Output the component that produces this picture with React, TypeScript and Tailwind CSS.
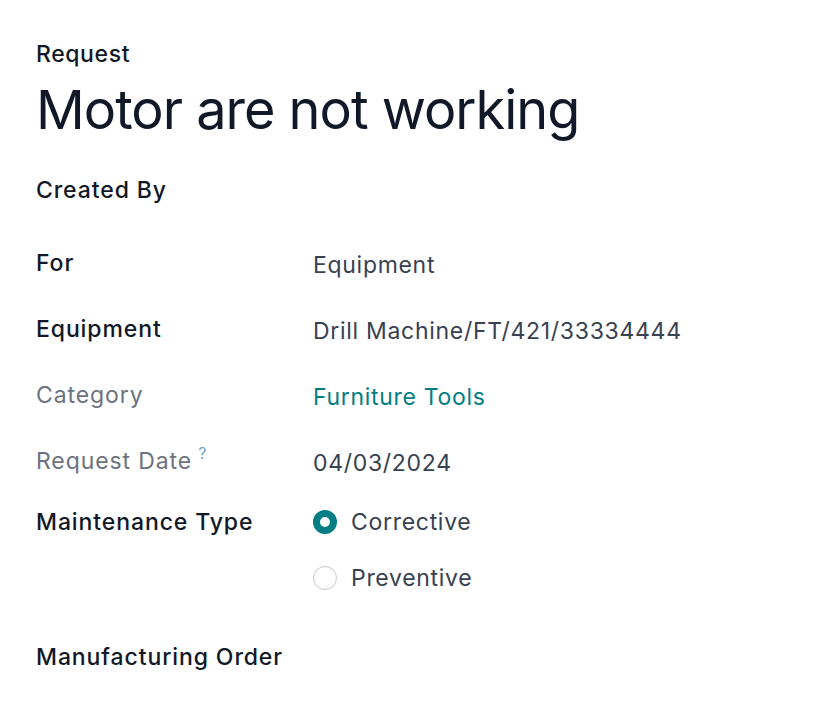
import React from "react";

const Row = ({
  label,
  muted,
  help,
  children,
}: {
  label: string;
  muted?: boolean;
  help?: boolean;
  children?: React.ReactNode;
}) => (
  <div className="grid grid-cols-[277px_1fr] items-start min-h-[66px]">
    <div
      className={`text-[23px] leading-[32px] tracking-[0.9px] ${
        muted ? "text-[#6b7280] font-normal" : "text-[#111827] font-medium"
      }`}
    >
      {label}
      {help && (
        <span className="text-[#72a8c4] text-[16px] ml-[6px] relative -top-[10px]">?</span>
      )}
    </div>
    <div className="text-[23px] leading-[32px] tracking-[0.7px] text-[#374151] pt-[2px]">
      {children}
    </div>
  </div>
);

export default function App() {
  return (
    <div
      className="bg-white min-h-[716px] w-[838px] pl-9 pt-[38px]"
      style={{ fontFamily: "Inter, 'Noto Sans', sans-serif" }}
    >
      <div className="text-[23px] leading-[32px] tracking-[0.6px] text-[#111827] font-medium">
        Request
      </div>
      <h1 className="mt-[6px] text-[54px] leading-[68px] text-[#111827] font-normal tracking-[-1px]">
        Motor are not working
      </h1>
      <div className="mt-[30px] text-[23px] leading-[32px] tracking-[0.9px] text-[#111827] font-medium min-h-[73px]">
        Created By
      </div>

      <Row label="For">Equipment</Row>
      <Row label="Equipment">Drill Machine/FT/421/33334444</Row>
      <Row label="Category" muted>
        <span className="text-[#017e84]">Furniture Tools</span>
      </Row>
      <Row label="Request Date" muted help>
        04/03/2024
      </Row>

      <div className="grid grid-cols-[277px_1fr] items-start -mt-[5px]">
        <div className="text-[23px] leading-[32px] tracking-[0.9px] text-[#111827] font-medium">
          Maintenance Type
        </div>
        <div className="flex flex-col gap-6">
          <label className="flex items-center gap-[14px] text-[23px] leading-[32px] tracking-[0.7px] text-[#374151]">
            <span className="w-6 h-6 rounded-full bg-[#017e84] flex items-center justify-center">
              <span className="w-[10px] h-[10px] rounded-full bg-white" />
            </span>
            Corrective
          </label>
          <label className="flex items-center gap-[14px] text-[23px] leading-[32px] tracking-[0.7px] text-[#374151]">
            <span className="w-6 h-6 rounded-full border border-[#c8c8c8] bg-white" />
            Preventive
          </label>
        </div>
      </div>

      <div className="mt-[47px] text-[23px] leading-[32px] tracking-[0.9px] text-[#111827] font-medium">
        Manufacturing Order
      </div>
    </div>
  );
}
